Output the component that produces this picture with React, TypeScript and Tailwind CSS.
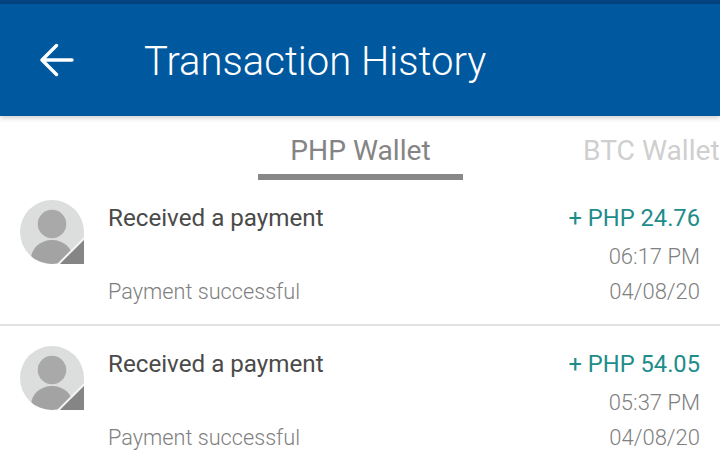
import React from "react";

function Avatar() {
  return (
    <svg width="64" height="64" viewBox="0 0 64 64" className="shrink-0">
      <defs>
        <clipPath id="c"><circle cx="32" cy="32" r="32" /></clipPath>
      </defs>
      <path d="M32 0a32 32 0 0 1 32 32v32H32A32 32 0 0 1 32 0Z" fill="#dcdedd" />
      <g clipPath="url(#c)">
        <circle cx="32" cy="24" r="14.3" fill="#a9a9a9" />
        <ellipse cx="32" cy="59" rx="21" ry="19" fill="#a3a3a3" />
      </g>
      <path d="M64 37 37 64h3l24-24Z" fill="#f4f4f4" />
      <path d="M64 40 40 64h24Z" fill="#858585" />
    </svg>
  );
}

function Row({ amount, time, date, last }: { amount: string; time: string; date: string; last?: boolean }) {
  return (
    <div className={last ? "flex pl-5 pr-5 pt-[20px]" : "flex pl-5 pr-5 pt-[20px] h-[146px] border-b-2 border-[#e2e2e2]"}>
      <Avatar />
      <div className="flex-1 ml-6 flex flex-col">
        <div className="flex justify-between items-start h-[32px]">
          <span className="text-[24.200px] leading-[36px] text-[#4a4a4a]">Received a payment</span>
          <span className="text-[23.700px] leading-[36px] text-[#1f8c8c]">+ PHP {amount}</span>
        </div>
        <div className="flex justify-end h-[40px] items-center">
          <span className="text-[22px] font-light text-[#808080] leading-[30px] mt-[10px]">{time}</span>
        </div>
        <div className="flex justify-between items-center h-[30px]">
          <span className="text-[21.700px] font-light text-[#808080] leading-[30px] mt-[9px]">Payment successful</span>
          <span className="text-[22px] font-light text-[#808080] leading-[30px] mt-[9px]">{date}</span>
        </div>
      </div>
    </div>
  );
}

export default function App() {
  return (
    <div className="w-[720px] h-[468px] overflow-hidden bg-white font-['Roboto',sans-serif]">
      <div className="h-[4px] bg-[#044480]" />
      <header className="relative z-10 h-[112px] bg-[#00589f] flex items-center pl-[40px] shadow-[0_2px_5px_rgba(0,0,0,0.2)]">
        <svg width="34" height="34" viewBox="0 0 34 34" fill="none" stroke="#fff" strokeWidth="3.4" strokeLinecap="round" strokeLinejoin="round" className="shrink-0 -mt-[1px]">
          <path d="M2 17h30M16.500 2.500 2 17l14.500 14.500" />
        </svg>
        <h1 className="ml-[70px] text-[40px] font-light text-white leading-none mt-[3px]">Transaction History</h1>
      </header>
      <nav className="flex h-[64px] pl-[258px]">
        <div className="w-[205px] h-[64px] border-b-[6px] border-[#888888] text-center">
          <span className="text-[28.200px] leading-[69px] text-[#848484]">PHP Wallet</span>
        </div>
        <div className="ml-[120px] whitespace-nowrap">
          <span className="text-[28.200px] leading-[69px] text-[#cfcfcf]">BTC Wallet</span>
        </div>
      </nav>
      <Row amount="24.76" time="06:17 PM" date="04/08/20" />
      <Row amount="54.05" time="05:37 PM" date="04/08/20" last />
    </div>
  );
}
